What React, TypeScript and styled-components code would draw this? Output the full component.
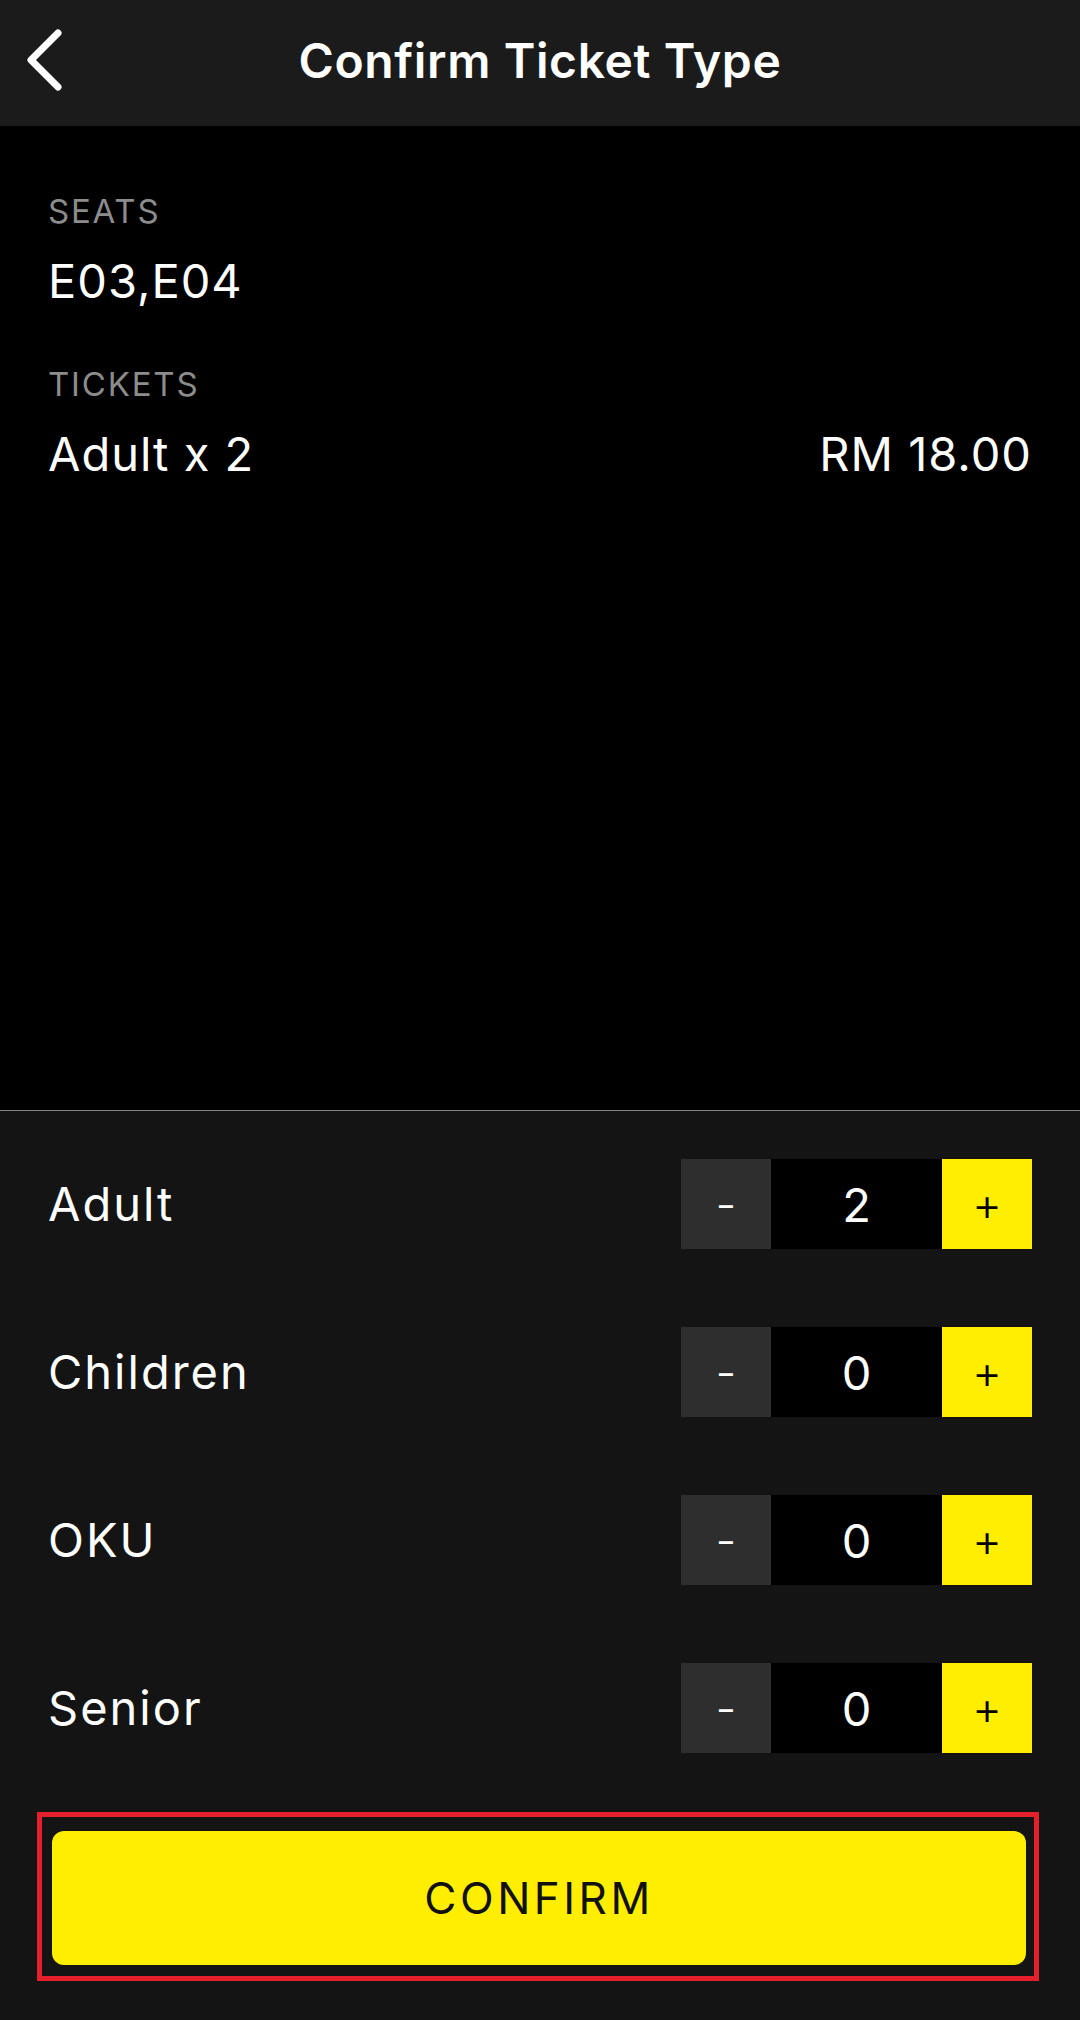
import * as React from 'react';
import styled, { createGlobalStyle } from 'styled-components';

const colors = {
  header: '#1b1b1b',
  panel: '#141414',
  minus: '#2e2e2e',
  yellow: '#ffee00',
  label: '#8c8c8c',
  annotate: '#e3202b',
};

type TicketRow = {
  name: string;
  count: number;
};

const rows: TicketRow[] = [
  { name: 'Adult', count: 2 },
  { name: 'Children', count: 0 },
  { name: 'OKU', count: 0 },
  { name: 'Senior', count: 0 },
];

const BackIcon = () => (
  <svg width="40" height="66" viewBox="0 0 40 66" fill="none">
    <path
      d="M33 5 L6 32 L33 59"
      stroke="#fff"
      strokeWidth="7"
      strokeLinecap="round"
      strokeLinejoin="round"
    />
  </svg>
);

const Stepper = ({ count }: { count: number }) => (
  <StepperBox>
    <StepButton kind="minus">-</StepButton>
    <StepValue>{count}</StepValue>
    <StepButton kind="plus">+</StepButton>
  </StepperBox>
);

export default function App() {
  return (
    <>
      <GlobalStyle />
      <Screen>
        <Header>
          <BackButton>
            <BackIcon />
          </BackButton>
          <Title>Confirm Ticket Type</Title>
        </Header>
        <Summary>
          <Field>
            <Label>SEATS</Label>
            <Value>E03,E04</Value>
          </Field>
          <Field>
            <Label>TICKETS</Label>
            <ValueRow>
              <Value>Adult x 2</Value>
              <Value>RM 18.00</Value>
            </ValueRow>
          </Field>
        </Summary>
        <Panel>
          <Rows>
            {rows.map((row) => (
              <Row key={row.name}>
                <RowName>{row.name}</RowName>
                <Stepper count={row.count} />
              </Row>
            ))}
          </Rows>
          <Highlight>
            <ConfirmButton>CONFIRM</ConfirmButton>
          </Highlight>
        </Panel>
      </Screen>
    </>
  );
}

const GlobalStyle = createGlobalStyle`
  html, body {
    margin: 0;
    padding: 0;
    background: ${colors.panel};
  }
  * {
    box-sizing: border-box;
  }
`;

const Screen = styled.div`
  width: 1080px;
  height: 2020px;
  display: flex;
  flex-direction: column;
  background: #000;
  color: #fff;
  font-family: Inter, 'Liberation Sans', sans-serif;
  overflow: hidden;
`;

const Header = styled.div`
  position: relative;
  height: 126px;
  flex-shrink: 0;
  display: flex;
  align-items: center;
  justify-content: center;
  background: ${colors.header};
`;

const BackButton = styled.div`
  position: absolute;
  left: 25px;
  top: 28px;
  display: flex;
`;

const Title = styled.div`
  font-size: 48px;
  font-weight: 600;
  letter-spacing: 0.6px;
  line-height: 1;
  padding-bottom: 4px;
`;

const Summary = styled.div`
  flex: 1;
  display: flex;
  flex-direction: column;
  gap: 55px;
  padding: 65px 48px 0 48px;
  border-bottom: 1px solid #858585;
`;

const Field = styled.div`
  display: flex;
  flex-direction: column;
  gap: 22px;
`;

const Label = styled.div`
  font-size: 33px;
  line-height: 40px;
  letter-spacing: 1.8px;
  color: ${colors.label};
`;

const ValueRow = styled.div`
  display: flex;
  justify-content: space-between;
`;

const Value = styled.div`
  font-size: 47px;
  line-height: 56px;
  font-weight: 400;
  letter-spacing: 1px;
`;

const Panel = styled.div`
  height: 909px;
  flex-shrink: 0;
  display: flex;
  flex-direction: column;
  padding: 48px 48px 0 48px;
  background: ${colors.panel};
`;

const Rows = styled.div`
  display: flex;
  flex-direction: column;
  gap: 78px;
`;

const Row = styled.div`
  display: flex;
  align-items: center;
  justify-content: space-between;
  height: 90px;
`;

const RowName = styled.div`
  font-size: 47px;
  line-height: 90px;
  letter-spacing: 2px;
`;

const StepperBox = styled.div`
  display: flex;
  height: 90px;
`;

const StepButton = styled.div<{ kind: 'minus' | 'plus' }>`
  width: 90px;
  display: flex;
  align-items: center;
  justify-content: center;
  font-size: 46px;
  font-weight: 300;
  background: ${(p) => (p.kind === 'plus' ? colors.yellow : colors.minus)};
  color: ${(p) => (p.kind === 'plus' ? '#000' : '#fff')};
`;

const StepValue = styled.div`
  width: 171px;
  display: flex;
  align-items: center;
  justify-content: center;
  font-size: 47px;
  background: #000;
`;

const Highlight = styled.div`
  margin: 59px -7px 0 -11px;
  padding: 14px 8px 11px 10px;
  border: 5px solid ${colors.annotate};
`;

const ConfirmButton = styled.div`
  height: 134px;
  display: flex;
  align-items: center;
  justify-content: center;
  border-radius: 12px;
  background: ${colors.yellow};
  color: #111;
  font-size: 44px;
  font-weight: 400;
  letter-spacing: 3.5px;
`;
